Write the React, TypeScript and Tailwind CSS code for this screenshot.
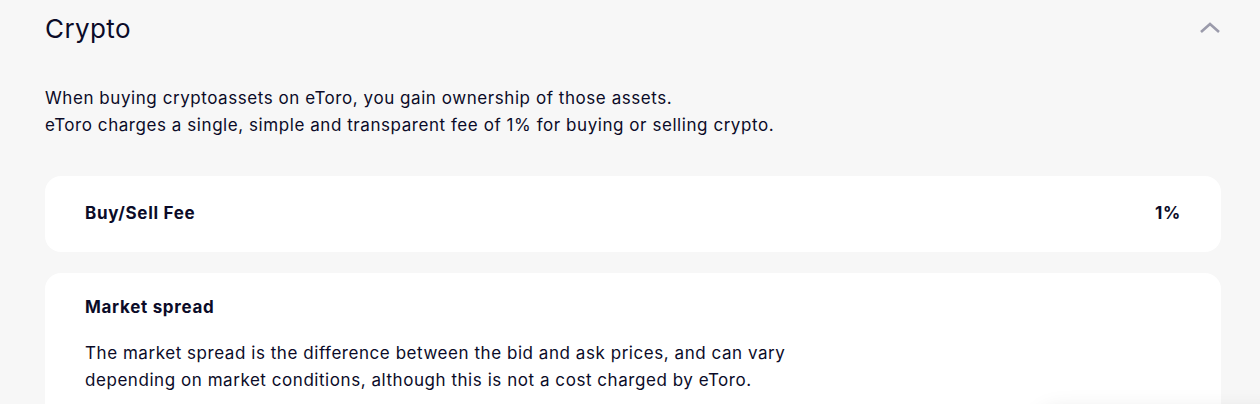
import React from "react";

export default function App() {
  return (
    <div
      className="relative min-h-screen overflow-hidden bg-[#f7f7f7] pl-[45px] pr-[39px] pt-[11px] text-[#0b0b28]"
      style={{ fontFamily: "Inter, 'Noto Sans', sans-serif" }}
    >
      {/* Header */}
      <div className="flex items-center justify-between h-[34px]">
        <h2 className="text-[26px] font-normal tracking-[0.4px]">Crypto</h2>
        <svg width="22" height="14" viewBox="0 0 22 14">
          <path d="M2 11 L11 3 L20 11" fill="none" stroke="#9b9bab" strokeWidth="2.6" />
        </svg>
      </div>

      {/* Intro */}
      <p className="mt-[40px] text-[17px] leading-[27px] tracking-[0.56px]">
        When buying cryptoassets on eToro, you gain ownership of those assets.
        <br />
        eToro charges a single, simple and transparent fee of 1% for buying or selling crypto.
      </p>

      {/* Fee card */}
      <div className="mt-[37px] flex h-[76px] items-center justify-between rounded-2xl bg-white px-10">
        <span className="text-[17px] font-bold tracking-[0.7px]">Buy/Sell Fee</span>
        <span className="text-[17px] font-bold tracking-[0.7px]">1%</span>
      </div>

      {/* Market spread card */}
      <div className="mt-[21px] rounded-2xl bg-white px-10 pt-[22px] pb-10">
        <h3 className="text-[17px] font-bold leading-6 tracking-[0.7px]">Market spread</h3>
        <p className="mt-[21px] text-[17px] leading-[27px] tracking-[0.55px]">
          The market spread is the difference between the bid and ask prices, and can vary
          <br />
          depending on market conditions, although this is not a cost charged by eToro.
        </p>
      </div>

      {/* floating widget below the fold */}
      <div className="absolute left-[1040px] top-[412px] h-[80px] w-[260px] rounded-2xl bg-white shadow-[0_0_24px_rgba(0,0,0,0.12)]" />
    </div>
  );
}
